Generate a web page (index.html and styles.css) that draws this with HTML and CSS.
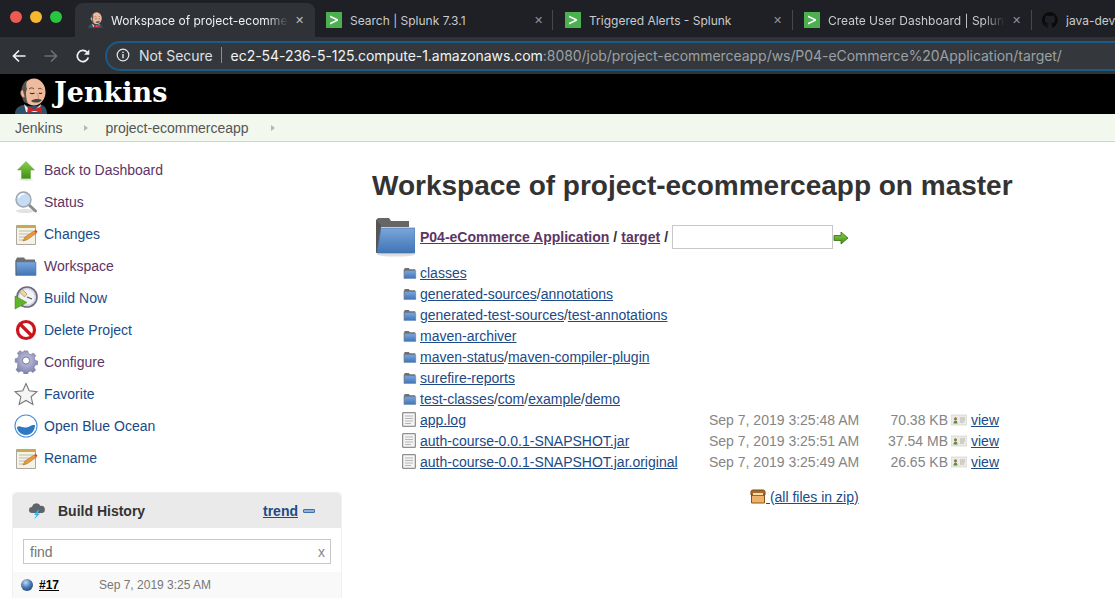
FILE: index.html
```html
<!DOCTYPE html>
<html lang="en">
<head>
<meta charset="utf-8">
<title>Workspace of project-ecommerceapp</title>
<link rel="stylesheet" href="styles.css">
</head>
<body>
<svg class="defs" width="0" height="0" aria-hidden="true">
  <defs>
    <linearGradient id="gFolder" x1="0" y1="0" x2="0" y2="1"><stop offset="0" stop-color="#7ba6dc"/><stop offset="1" stop-color="#3f74b5"/></linearGradient>
    <linearGradient id="gArrow" x1="0" y1="0" x2="0" y2="1"><stop offset="0" stop-color="#8cd04a"/><stop offset="1" stop-color="#3f8f17"/></linearGradient>
    <radialGradient id="gBall" cx=".4" cy=".3" r=".8"><stop offset="0" stop-color="#c6d8ef"/><stop offset=".5" stop-color="#4a7db8"/><stop offset="1" stop-color="#1d3f6e"/></radialGradient>
    <radialGradient id="gGear" cx=".5" cy=".4" r=".7"><stop offset="0" stop-color="#c9cbe6"/><stop offset="1" stop-color="#6d719f"/></radialGradient>
    <symbol id="i-folder" viewBox="0 0 24 24">
      <path d="M2 5.500 3 3.500h7l1.500 2h9.500v5H2z" fill="#6f6f6f"/>
      <path d="M2 8h20v13.500H2z" fill="url(#gFolder)" stroke="#5d7da6" stroke-width=".6"/>
      <path d="M2 21.500 1.800 6" stroke="#555" stroke-width=".8" fill="none"/>
    </symbol>
    <symbol id="i-note" viewBox="0 0 24 24">
      <path d="M2.500 3.500h19v19h-19z" fill="#f6f3e6" stroke="#a9a9a0"/>
      <path d="M3 3h18v3H3z" fill="#c9a94e"/>
      <path d="M5 9h14M5 12h11M5 15h8M5 18h7" stroke="#bcbcb4"/>
      <path d="m9 19 2-4 9-6 2.500 2-9 6.500z" fill="#e89b3a" stroke="#9a5b14" stroke-width=".5"/>
      <path d="m20 9 2.500 2 1-1.500-2-1.800z" fill="#d6403a"/>
    </symbol>
    <symbol id="i-file" viewBox="0 0 14 15">
      <path d="M.7.700h12.600v13.600H.7z" fill="#f4f4f4" stroke="#777"/>
      <path d="M3 4h8M3 6.500h8M3 9h8M3 11.500h6" stroke="#b5b5b5"/>
    </symbol>
    <symbol id="i-tabfav" viewBox="0 0 16 16">
      <path d="M0 0h16v16H0z" fill="#4cb050"/>
      <path d="m4 3.500 8 3.800v1.400l-8 3.800v-1.800l6-2.700-6-2.700z" fill="#fff"/>
    </symbol>
    <symbol id="i-fp" viewBox="0 0 16 12">
      <path d="M0 1h16v10H0z" fill="#ecebe6" stroke="#cfcfcb" stroke-width=".6"/>
      <circle cx="4.500" cy="4.700" r="1.500" fill="#8a7346"/>
      <path d="M2.500 9.500c0-2 1-3 2-3s2 1 2 3z" fill="#5f8a3c"/>
      <path d="M9 4h5M9 6h5M9 8h4" stroke="#b3b3ad"/>
    </symbol>
    <symbol id="i-face" viewBox="0 0 33 36">
      <path d="M0 36c0-5 3-8 8-9l6 1h7l6-1c3 1 5 4 5 9z" fill="#2f5168"/>
      <path d="M9 26l5 5h7l5-5-2 8H11z" fill="#f4f0e8"/>
      <ellipse cx="19" cy="14" rx="11.500" ry="13.500" fill="#efbb9f"/>
      <path d="M9 24C5 16 5 7 12 2c-1 4-1 6 0 9l-1 3c0 3 0 7 2 12z" fill="#55524f"/>
      <path d="M8 12c-2-.5-3 2-2 5 .5 2 2.500 3 4 2z" fill="#efbb9f" stroke="#6e4d3d" stroke-width=".6"/>
      <path d="M14 11c1.500-1.500 3.500-1.500 5 0M23 11c1.500-1 3-1 4 .5" stroke="#5a3b2c" stroke-width=".9" fill="none"/>
      <path d="M15 15c1.500.8 3 .8 4.500 0M24 15c1 .6 2 .6 3 0" stroke="#333" stroke-width="1.100" fill="none"/>
      <path d="M22 15c1 2 2 4 1 6" stroke="#b9826a" stroke-width=".8" fill="none"/>
      <path d="M16 23c3-2.500 8-2.500 11-1-2 3-8 3.500-11 1z" fill="#4c4440"/>
      <path d="M13 28.500l6 2.500h1l6-2.500 1 7-6.500-2.500h-2L12 35.500z" fill="#cc2229"/>
    </symbol>
  </defs>
</svg>

<div class="tabstrip">
  <div class="lights"><span class="light red"></span><span class="light amber"></span><span class="light green"></span></div>
  <div class="tab active">
    <svg class="fav fav-face"><use href="#i-face"/></svg>
    <span class="tab-title fade">Workspace of project-ecomme</span>
    <span class="tab-x">✕</span>
  </div>
  <div class="tab second">
    <svg class="fav"><use href="#i-tabfav"/></svg>
    <span class="tab-title">Search | Splunk 7.3.1</span>
    <span class="tab-x">✕</span>
  </div>
  <div class="tab third">
    <svg class="fav"><use href="#i-tabfav"/></svg>
    <span class="tab-title">Triggered Alerts - Splunk</span>
    <span class="tab-x">✕</span>
  </div>
  <div class="tab fourth">
    <svg class="fav"><use href="#i-tabfav"/></svg>
    <span class="tab-title fade">Create User Dashboard | Splun</span>
    <span class="tab-x">✕</span>
  </div>
  <div class="tab fifth">
    <svg class="fav" viewBox="0 0 16 16"><path fill="#0a0a0b" d="M8 0a8 8 0 0 0-2.500 15.600c.4.100.5-.200.500-.400v-1.400c-2.200.500-2.700-1-2.700-1-.4-.900-.900-1.200-.900-1.200-.700-.500.100-.500.100-.500.800.100 1.200.800 1.200.800.700 1.200 1.900.900 2.300.700.100-.500.300-.900.500-1.100-1.800-.200-3.600-.900-3.600-4 0-.900.300-1.600.800-2.100-.100-.200-.400-1 .100-2.100 0 0 .700-.200 2.200.800a7.600 7.600 0 0 1 4 0c1.500-1 2.200-.800 2.200-.800.500 1.100.200 1.900.100 2.100.500.600.800 1.300.800 2.100 0 3.100-1.900 3.700-3.700 3.900.300.300.600.800.600 1.500v2.200c0 .200.100.500.600.400A8 8 0 0 0 8 0z"/></svg>
    <span class="tab-title">java-dev</span>
  </div>
</div>

<div class="toolbar">
  <svg class="nav-icon" viewBox="0 0 16 16"><path d="M14.500 8H2.500M8 2.500 2.500 8 8 13.500" fill="none" stroke="#f2f2f2" stroke-width="1.700"/></svg>
  <svg class="nav-icon" viewBox="0 0 16 16"><path d="M1.500 8h12M8 2.500 13.500 8 8 13.500" fill="none" stroke="#6c7074" stroke-width="1.700"/></svg>
  <svg class="nav-icon" viewBox="0 0 16 16"><path d="M13.300 9.500A5.600 5.600 0 1 1 12 4.200" fill="none" stroke="#f2f2f2" stroke-width="1.700"/><path d="M14.300 1.500v5.300H9z" fill="#f2f2f2"/></svg>
  <div class="omnibox">
    <svg class="info" viewBox="0 0 14 14"><circle cx="7" cy="7" r="5.800" fill="none" stroke="#e8eaed" stroke-width="1.200"/><path d="M6.300 6h1.400v4.300H6.300zM6.300 3.700h1.400v1.400H6.300z" fill="#e8eaed"/></svg>
    <span class="not-secure">Not Secure</span>
    <span class="sep"></span>
    <span class="url"><span class="host">ec2-54-236-5-125.compute-1.amazonaws.com</span>:8080/job/project-ecommerceapp/ws/P04-eCommerce%20Application/target/</span>
  </div>
</div>

<header class="jenkins-head">
  <svg class="logo"><use href="#i-face"/></svg>
  <span class="brand">Jenkins</span>
</header>

<nav class="crumbs">
  <span class="crumb">Jenkins</span><span class="crumb-arrow"></span>
  <span class="crumb">project-ecommerceapp</span><span class="crumb-arrow"></span>
</nav>

<div class="page">
  <aside class="side">
    <ul class="tasks">
      <li class="task">
        <svg class="task-icon" viewBox="0 0 24 24"><ellipse cx="12" cy="21.500" rx="7" ry="1.500" fill="#e6e6e6"/><path d="M12 3.500 20.500 12H16.500v8.500h-9V12h-4z" fill="url(#gArrow)" stroke="#5aa52a" stroke-width=".5"/></svg>
        <a class="visited">Back to Dashboard</a>
      </li>
      <li class="task">
        <svg class="task-icon" viewBox="0 0 24 24"><ellipse cx="11" cy="21" rx="9" ry="2" fill="#e2e2e2"/><path d="m14.500 14.500 7 6.500" stroke="#8c8c8c" stroke-width="3" stroke-linecap="round"/><circle cx="9.500" cy="9.500" r="7.500" fill="#c5dcf3" stroke="#9aa5b0" stroke-width="1.400"/><path d="M4.500 8a5.500 5.500 0 0 1 6-4" fill="none" stroke="#fff" stroke-width="1.500"/></svg>
        <a class="visited">Status</a>
      </li>
      <li class="task">
        <svg class="task-icon"><use href="#i-note"/></svg>
        <a>Changes</a>
      </li>
      <li class="task">
        <svg class="task-icon"><use href="#i-folder"/></svg>
        <a class="visited">Workspace</a>
      </li>
      <li class="task">
        <svg class="task-icon" viewBox="0 0 24 24"><circle cx="13" cy="11" r="10" fill="#d8d6e4" stroke="#6b6880" stroke-width="1.600"/><circle cx="13" cy="11" r="7.500" fill="#f3f2f7"/><path d="m8 3 5 5-2.500 3-5-5z" fill="#e8d9a0" stroke="#7a6c3a" stroke-width=".5"/><path d="m13 11 5 2" stroke="#555" stroke-width="1.200"/><path d="M1 10v13l12-6.500z" fill="#5fb52a" stroke="#3c7f16" stroke-width=".5"/></svg>
        <a>Build Now</a>
      </li>
      <li class="task">
        <svg class="task-icon" viewBox="0 0 24 24"><circle cx="12" cy="12" r="8.500" fill="#fff" stroke="#c9151c" stroke-width="3.200"/><path d="m6 6 12 12" stroke="#c9151c" stroke-width="3.200"/></svg>
        <a>Delete Project</a>
      </li>
      <li class="task">
        <svg class="task-icon" viewBox="0 0 24 24"><path d="M10 1h4l.7 3 2.700 1.100 2.700-1.700 2.800 2.800-1.700 2.700 1.100 2.700 2.700.6v4l-3 .7-1 2.700 1.600 2.700-2.800 2.800-2.700-1.700-2.700 1.100-.6 2.700h-4l-.7-3-2.700-1-2.700 1.600-2.800-2.800 1.700-2.700L2.800 14.300 0 13.600v-4l3-.7 1-2.700-1.600-2.700 2.800-2.800 2.700 1.700L10.600 1z" transform="translate(1.200 0) scale(.9)" fill="url(#gGear)" stroke="#73778f" stroke-width=".6"/><circle cx="12" cy="10.500" r="3.600" fill="#fff" stroke="#73778f"/></svg>
        <a class="visited">Configure</a>
      </li>
      <li class="task">
        <svg class="task-icon" viewBox="0 0 24 24"><path d="m12 1.500 3.200 7.300 7.800.8-5.900 5.200 1.800 7.700-6.900-4-6.900 4 1.800-7.700L1 9.600l7.800-.8z" fill="#f4f4f4" stroke="#777" stroke-width="1.100"/></svg>
        <a>Favorite</a>
      </li>
      <li class="task">
        <svg class="task-icon" viewBox="0 0 24 24"><circle cx="12" cy="12" r="11" fill="#fff" stroke="#4a90d9" stroke-width="1.100"/><path d="M3 13c3-2 5 1 9 .5s5-3 9-2.500c0 6-4 10-9 10s-9-4-9-8z" fill="#2f78c4"/></svg>
        <a>Open Blue Ocean</a>
      </li>
      <li class="task">
        <svg class="task-icon"><use href="#i-note"/></svg>
        <a>Rename</a>
      </li>
    </ul>

    <section class="history">
      <div class="history-head">
        <svg class="cloud" viewBox="0 0 18 18"><path d="M4 11a3 3 0 0 1 0-6 4.500 4.500 0 0 1 8.500-1 3.500 3.500 0 0 1 1.500 7z" fill="#5f6468"/><path d="m10 8-4 5h2.500L6 17.500l6-6H9.500L11 8z" fill="#35b6f0"/></svg>
        <span class="history-title">Build History</span>
        <a class="trend">trend</a>
        <span class="collapse"></span>
      </div>
      <div class="history-search">
        <div class="find"><span>find</span><span class="find-x">x</span></div>
      </div>
      <div class="build">
        <svg class="ball" viewBox="0 0 12 12"><circle cx="6" cy="6" r="6" fill="url(#gBall)"/></svg>
        <a class="build-no">#17</a>
        <span class="build-date">Sep 7, 2019 3:25 AM</span>
      </div>
    </section>
  </aside>

  <main class="main">
    <h1 class="title">Workspace of project-ecommerceapp on master</h1>
    <div class="path">
      <svg class="big-folder" viewBox="0 0 40 40">
        <ellipse cx="21" cy="37.500" rx="19" ry="2" fill="#dedede"/>
        <path d="M1 3 3 1h11l2 3h18v6H1z" fill="#666"/>
        <path d="M1 3v33h5V8z" fill="#555"/>
        <path d="M6 11h34v25H2z" fill="url(#gFolder)" stroke="#4f77a8" stroke-width=".7"/>
      </svg>
      <a class="visited u b">P04-eCommerce Application</a><span class="slash">/</span><a class="visited u b">target</a><span class="slash">/</span>
      <span class="path-input"></span>
      <svg class="go" viewBox="0 0 16 14"><path d="M1 4.500h7V1l7 6-7 6V9.500H1z" fill="url(#gArrow)" stroke="#2f6b10" stroke-width=".8"/></svg>
    </div>

    <div class="listing">
      <div class="row"><svg class="ri"><use href="#i-folder"/></svg><span class="name"><a class="u">classes</a></span></div>
      <div class="row"><svg class="ri"><use href="#i-folder"/></svg><span class="name"><a class="u">generated-sources</a>/<a class="u">annotations</a></span></div>
      <div class="row"><svg class="ri"><use href="#i-folder"/></svg><span class="name"><a class="u">generated-test-sources</a>/<a class="u">test-annotations</a></span></div>
      <div class="row"><svg class="ri"><use href="#i-folder"/></svg><span class="name"><a class="u">maven-archiver</a></span></div>
      <div class="row"><svg class="ri"><use href="#i-folder"/></svg><span class="name"><a class="u">maven-status</a>/<a class="u">maven-compiler-plugin</a></span></div>
      <div class="row"><svg class="ri"><use href="#i-folder"/></svg><span class="name"><a class="u">surefire-reports</a></span></div>
      <div class="row"><svg class="ri"><use href="#i-folder"/></svg><span class="name"><a class="u">test-classes</a>/<a class="u">com</a>/<a class="u">example</a>/<a class="u">demo</a></span></div>
      <div class="row">
        <svg class="ri-file"><use href="#i-file"/></svg><span class="name"><a class="u">app.log</a></span>
        <span class="date">Sep 7, 2019 3:25:48 AM</span><span class="size">70.38 KB</span>
        <svg class="fp"><use href="#i-fp"/></svg>
        <a class="u view">view</a>
      </div>
      <div class="row">
        <svg class="ri-file"><use href="#i-file"/></svg><span class="name"><a class="u">auth-course-0.0.1-SNAPSHOT.jar</a></span>
        <span class="date">Sep 7, 2019 3:25:51 AM</span><span class="size">37.54 MB</span>
        <svg class="fp"><use href="#i-fp"/></svg>
        <a class="u view">view</a>
      </div>
      <div class="row">
        <svg class="ri-file"><use href="#i-file"/></svg><span class="name"><a class="u">auth-course-0.0.1-SNAPSHOT.jar.original</a></span>
        <span class="date">Sep 7, 2019 3:25:49 AM</span><span class="size">26.65 KB</span>
        <svg class="fp"><use href="#i-fp"/></svg>
        <a class="u view">view</a>
      </div>
    </div>

    <div class="zip">
      <svg class="zip-icon" viewBox="0 0 16 15"><path d="M1.500 6h13v8h-13z" fill="#eeb06a" stroke="#8a5414"/><path d="M1 2.500C1 1.500 2 1 3 1h10c1 0 2 .5 2 1.500V6H1z" fill="#a8682a" stroke="#7d4a12"/><path d="M3 4h10v2H3z" fill="#f6dfae"/></svg>
      <a class="u zip-link">&nbsp;(all files in zip)</a>
    </div>
  </main>
</div>
</body>
</html>
```

FILE: styles.css
```css
* { box-sizing: border-box; }
html, body { margin: 0; padding: 0; }
body {
  width: 1115px;
  height: 599px;
  overflow: hidden;
  background: #fff;
  color: #333;
  font-family: "Liberation Sans", Arial, sans-serif;
  font-size: 14px;
}
.defs { display: block; height: 0; }
a { color: #204a87; }
a.visited { color: #5c3566; }
a.u { text-decoration: underline; }
a.b { font-weight: 700; }

/* browser chrome */
.tabstrip {
  display: flex;
  height: 37px;
  background: #1e2025;
  color: #c9cbce;
  font-family: Inter, "Liberation Sans", sans-serif;
  font-size: 12px;
  overflow: hidden;
}
.lights { display: flex; gap: 8px; width: 75px; flex: none; padding: 11px 0 0 10px; }
.light { width: 12px; height: 12px; border-radius: 50%; }
.red { background: #ee5a52; }
.amber { background: #f5b82e; }
.green { background: #27c63f; }
.tab {
  display: flex;
  align-items: center;
  flex: none;
  height: 34px;
  margin-top: 3px;
  position: relative;
}
.tab.active { background: #2f3337; border-radius: 8px 8px 0 0; width: 240px; padding: 0 9px 0 13px; color: #eef0f2; }
.tab.second { width: 238px; padding: 0 8px 0 11px; }
.tab.third { width: 239.5px; padding: 0 8px 0 12px; }
.tab.fourth { width: 239.500px; padding: 0 9px 0 11.5px; }
.tab.fifth { flex: 1; min-width: 0; padding-left: 10px; }
.tab.second::after, .tab.third::after, .tab.fourth::after {
  content: "";
  position: absolute;
  right: 0;
  top: 7px;
  width: 1px;
  height: 20px;
  background: #44474c;
}
.fav { width: 16px; height: 16px; flex: none; }
.fav-face { width: 15px; }
.tab-title {
  flex: 1;
  min-width: 0;
  margin-left: 8px;
  white-space: nowrap;
  overflow: hidden;
}
.tab-title.fade {
  -webkit-mask-image: linear-gradient(to right, #000 88%, transparent 100%);
  mask-image: linear-gradient(to right, #000 88%, transparent 100%);
}
.tab-x { flex: none; width: 14px; text-align: center; font-size: 11px; color: #90949a; margin-left: 4px; }
.active .tab-x { color: #b9bcc0; }

.toolbar {
  display: flex;
  align-items: center;
  height: 37px;
  background: #2f3337;
  padding-left: 11px;
}
.nav-icon { width: 16px; height: 16px; flex: none; margin-right: 16px; }
.omnibox {
  display: flex;
  align-items: center;
  flex: 1;
  min-width: 0;
  height: 30px;
  margin-left: -2px;
  padding: 0 0 1px 9px;
  border: 2px solid #1a5a86;
  border-right: 0;
  border-radius: 15px 0 0 15px;
  background: #34383c;
  font-family: Inter, "Liberation Sans", sans-serif;
  font-size: 14px;
  letter-spacing: -0.05px;
  color: #9ca0a5;
  white-space: nowrap;
}
.info { width: 14px; height: 14px; flex: none; }
.not-secure { margin-left: 9px; color: #dfe1e4; }
.sep { width: 1px; height: 16px; background: #8a8d91; margin: 0 9px 0 8px; }
.host { color: #f1f3f4; }

/* jenkins header */
.jenkins-head {
  display: flex;
  align-items: flex-end;
  height: 40px;
  background: #000;
  padding-left: 15px;
  overflow: hidden;
}
.logo { width: 33px; height: 36px; flex: none; }
.brand {
  margin: 0 0 3px 6px;
  color: #fff;
  font-family: "DejaVu Serif", "Liberation Serif", serif;
  font-weight: 700;
  font-size: 27px;
  line-height: 36px;
}
.crumbs {
  display: flex;
  align-items: center;
  height: 28px;
  background: #f2f8ee;
  border-bottom: 1px solid #d3d3d0;
  padding-left: 15px;
  color: #555;
}
.crumb-arrow {
  width: 0; height: 0;
  margin: 0 17px 0 22px;
  border-left: 4px solid #b5b8b3;
  border-top: 3.500px solid transparent;
  border-bottom: 3.500px solid transparent;
}

.page { display: flex; }

/* left column */
.side { width: 372px; flex: none; padding: 12px 0 0 12px; }
.tasks { list-style: none; margin: 0; padding: 0; }
.task { display: flex; align-items: center; height: 32px; padding-left: 2px; }
.task-icon { width: 24px; height: 24px; flex: none; margin-right: 6px; }
.history {
  width: 330px;
  margin-top: 18px;
  border: 1px solid #f0f0f0;
  border-radius: 4px 4px 0 0;
  height: 106px;
}
.history-head {
  display: flex;
  align-items: center;
  height: 35px;
  background: #eaeaea;
  padding-left: 15px;
  border-radius: 4px 4px 0 0;
}
.cloud { width: 18px; height: 18px; flex: none; }
.history-title { margin-left: 12px; font-weight: 700; width: 205px; }
.trend { font-weight: 700; text-decoration: underline; }
.collapse {
  width: 12px; height: 4px;
  margin-left: 5px;
  background: #8fb3de;
  border: 1px solid #3f6fa8;
  border-radius: 1px;
}
.history-search { padding: 11px 10px 8px; }
.find {
  display: flex;
  justify-content: space-between;
  align-items: center;
  height: 25px;
  padding: 0 5px 0 6px;
  border: 1px solid #c8c8c8;
  color: #757575;
}
.find-x { color: #888; }
.build {
  display: flex;
  align-items: center;
  height: 26px;
  padding-left: 8px;
  background: #f9f9f9;
  font-size: 12px;
}
.ball { width: 12px; height: 12px; flex: none; }
.build-no { margin-left: 6px; width: 60px; color: #000; font-weight: 700; text-decoration: underline; }
.build-date { color: #777; }

/* main column */
.main { flex: 1; min-width: 0; }
.title {
  margin: 25px 0 0;
  font-size: 28px;
  line-height: 38px;
  font-weight: 700;
  color: #333;
  white-space: nowrap;
}
.path {
  display: flex;
  align-items: center;
  height: 40px;
  margin-top: 12px;
  padding-left: 3px;
  white-space: nowrap;
}
.big-folder { width: 40px; height: 40px; flex: none; margin-right: 5px; }
.slash { margin: 0 4px; font-weight: 700; }
.path-input {
  width: 161px;
  height: 24px;
  flex: none;
  border: 1px solid #c8c8c8;
  background: #fff;
}
.go { width: 16px; height: 14px; flex: none; margin-top: 2px; }
.listing { margin-top: 5px; padding-left: 31px; }
.row { display: flex; align-items: center; height: 21px; white-space: nowrap; }
.ri { width: 14px; height: 16px; flex: none; margin-right: 3px; }
.ri-file { width: 14px; height: 15px; flex: none; margin: 0 4px 0 -1px; }
.name { width: 289px; flex: none; }
.date { width: 150px; flex: none; color: #858585; }
.size { width: 89px; flex: none; text-align: right; color: #858585; }
.fp { width: 16px; height: 12px; flex: none; margin: 0 4px 0 3px; }
.zip {
  display: flex;
  align-items: center;
  height: 21px;
  margin-top: 14px;
  padding-left: 378px;
}
.zip-icon { width: 16px; height: 15px; flex: none; }
```
